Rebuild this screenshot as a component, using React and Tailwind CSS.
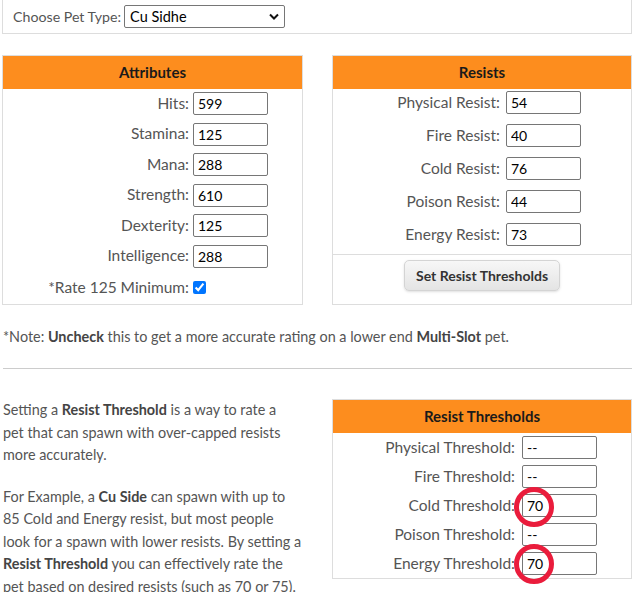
import { useState } from 'react';

const attributes = [
  ['Hits', '599'],
  ['Stamina', '125'],
  ['Mana', '288'],
  ['Strength', '610'],
  ['Dexterity', '125'],
  ['Intelligence', '288'],
];

const resists = [
  ['Physical Resist', '54'],
  ['Fire Resist', '40'],
  ['Cold Resist', '76'],
  ['Poison Resist', '44'],
  ['Energy Resist', '73'],
];

const thresholds = [
  ['Physical Threshold', '--'],
  ['Fire Threshold', '--'],
  ['Cold Threshold', '70'],
  ['Poison Threshold', '--'],
  ['Energy Threshold', '70'],
];

const inputClass =
  'w-[75px] h-[23px] border border-[#767676] rounded-[2px] px-[4px] text-[14px] text-black bg-white outline-none';

const PanelHeader = ({ children }) => (
  <div className="h-[33px] bg-[#fd8d1e] flex items-center justify-center font-bold text-[15px] text-[#1a1a1a]">
    {children}
  </div>
);

const App = () => {
  const [pet, setPet] = useState('Cu Sidhe');

  return (
    <div className="w-[637px] min-h-[592px] bg-white text-[14px] text-[#555] font-['Lato',sans-serif]">
      <div className="ml-[2px] w-[630px] h-[34px] border border-t-0 border-[#ddd] flex items-center pl-[10px] gap-[3px] text-[14.2px]">
        <span>Choose Pet Type:</span>
        <div className="relative">
          <select
            value={pet}
            onChange={(e) => setPet(e.target.value)}
            className="appearance-none w-[161px] h-[23px] border border-[#767676] rounded-[2px] pl-[5px] text-[14.5px] text-black bg-white outline-none"
          >
            <option>Cu Sidhe</option>
            <option>Hiryu</option>
            <option>Dragon</option>
          </select>
          <svg
            className="absolute right-[6px] top-[8px] pointer-events-none"
            width="10"
            height="7"
            viewBox="0 0 10 7"
          >
            <path d="M1 1.5 L5 5.5 L9 1.5" fill="none" stroke="#111" strokeWidth="2" />
          </svg>
        </div>
      </div>

      <div className="mt-[21px] ml-[2px] flex gap-[29px] text-[15.5px]">
        <div className="w-[301px] h-[250px] border border-[#ddd]">
          <PanelHeader>Attributes</PanelHeader>
          <div className="mt-[3px] flex flex-col gap-[7.5px]">
            {attributes.map(([label, value]) => (
              <div key={label} className="flex items-center h-[23px]">
                <span className="w-[186px] text-right">{label}:</span>
                <input className={`ml-[4px] ${inputClass}`} defaultValue={value} />
              </div>
            ))}
            <div className="flex items-center h-[23px] mt-[1px]">
              <span className="w-[186px] text-right">*Rate 125 Minimum:</span>
              <input type="checkbox" defaultChecked className="ml-[4px] w-[13px] h-[13px]" />
            </div>
          </div>
        </div>

        <div className="w-[300px] h-[250px] border border-[#ddd] flex flex-col">
          <PanelHeader>Resists</PanelHeader>
          <div className="mt-[2px] flex flex-col gap-[10px]">
            {resists.map(([label, value]) => (
              <div key={label} className="flex items-center h-[23px]">
                <span className="w-[167px] text-right">{label}:</span>
                <input className={`ml-[6px] ${inputClass}`} defaultValue={value} />
              </div>
            ))}
          </div>
          <div className="mt-[8px] border-t border-[#ddd] flex justify-center pt-[5px]">
            <button className="w-[156px] h-[31px] rounded-[5px] border border-[#d4d4d4] bg-gradient-to-b from-[#f7f7f7] to-[#e4e4e4] text-[14px] font-bold text-[#333] shadow-sm">
              Set Resist Thresholds
            </button>
          </div>
        </div>
      </div>

      <p className="mt-[22px] ml-[3px] leading-[20px] text-[14.4px]">
        *Note: <b className="text-[#444]">Uncheck</b> this to get a more accurate rating on a lower end{' '}
        <b className="text-[#444]">Multi-Slot</b> pet.
      </p>

      <hr className="mt-[21px] ml-[3px] w-[629px] border-t border-[#ccc]" />

      <div className="mt-[30px] ml-[2px] flex gap-[29px]">
        <div className="w-[301px] pl-[1px] leading-[22.5px] text-[14.4px] whitespace-nowrap">
          <p>
            Setting a <b className="text-[#444]">Resist Threshold</b> is a way to rate a
            <br />
            pet that can spawn with over-capped resists
            <br />
            more accurately.
          </p>
          <p className="mt-[19px]">
            For Example, a <b className="text-[#444]">Cu Side</b> can spawn with up to
            <br />
            85 Cold and Energy resist, but most people
            <br />
            look for a spawn with lower resists. By setting a
            <br />
            <b className="text-[#444]">Resist Threshold</b> you can effectively rate the
            <br />
            pet based on desired resists (such as 70 or 75).
          </p>
        </div>

        <div className="relative w-[300px] h-[180px] border border-[#ddd] text-[15.5px]">
          <PanelHeader>Resist Thresholds</PanelHeader>
          <div className="mt-[3px] flex flex-col gap-[6px]">
            {thresholds.map(([label, value]) => (
              <div key={label} className="flex items-center h-[23px]">
                <span className="w-[182px] text-right">{label}:</span>
                <input className={`ml-[7px] ${inputClass}`} defaultValue={value} />
              </div>
            ))}
          </div>
          <div className="absolute left-[181px] top-[87px] w-[40px] h-[40px] rounded-full border-[5px] border-[#ea1c3c] pointer-events-none" />
          <div className="absolute left-[181px] top-[144px] w-[40px] h-[40px] rounded-full border-[5px] border-[#ea1c3c] pointer-events-none" />
        </div>
      </div>
    </div>
  );
};

export default App;
